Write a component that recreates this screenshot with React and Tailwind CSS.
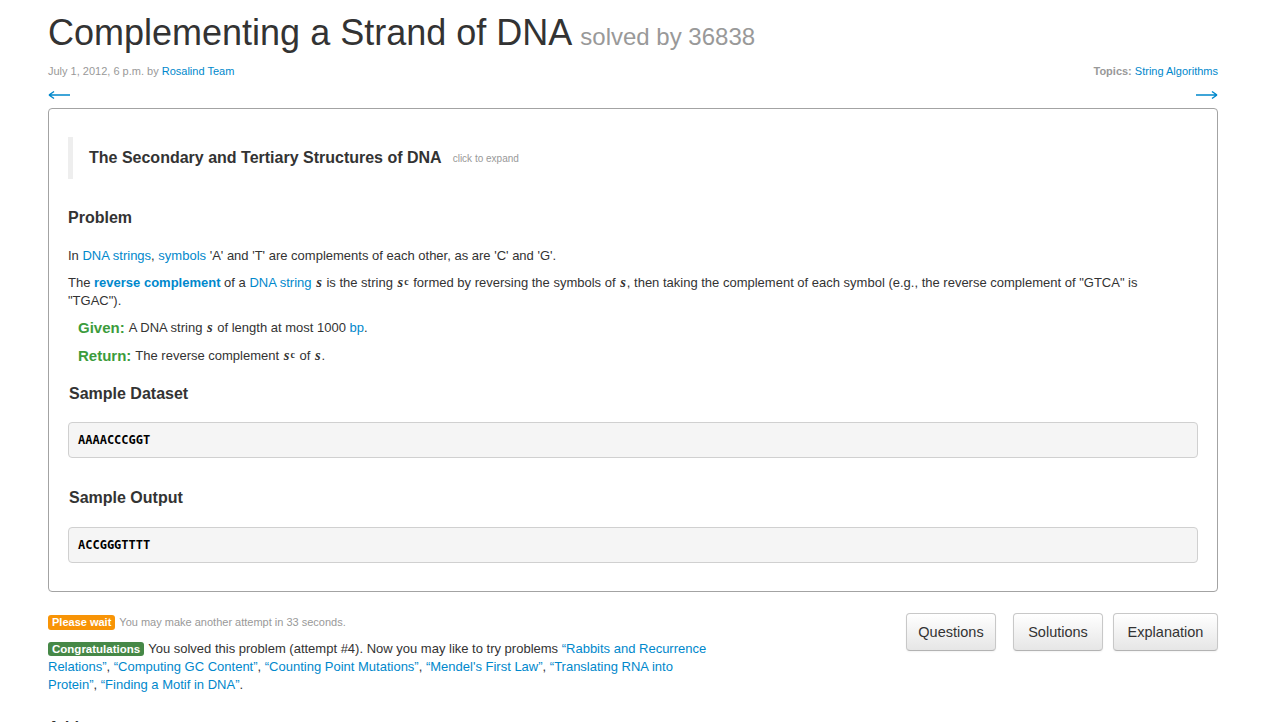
import React from "react";

const A = ({ children, bold }) => (
  <a className={`text-[#0088cc] ${bold ? "font-bold" : ""}`}>{children}</a>
);

const S = () => (
  <span className="font-bold italic text-[14.5px] leading-none mx-[1px]" style={{ fontFamily: '"Liberation Serif", serif' }}>s</span>
);
const Sc = () => (
  <span className="font-bold italic text-[14.5px] leading-none mx-[1px]" style={{ fontFamily: '"Liberation Serif", serif' }}>
    s<sup className="text-[10px] leading-none not-italic relative -top-[2px] ml-[1px]">c</sup>
  </span>
);

const Btn = ({ children, w }) => (
  <button className={`${w} h-[38px] text-[14.5px] text-[#333] rounded-[4px] border border-[#c8c8c8] border-b-[#b3b3b3] bg-gradient-to-b from-white to-[#e6e6e6] shadow-[inset_0_1px_0_rgba(255,255,255,0.2),0_1px_2px_rgba(0,0,0,0.05)]`}>
    {children}
  </button>
);

const Arrow = ({ dir }) => (
  <svg width="23" height="12" viewBox="0 0 23 12">
    {dir === "left" ? (
      <path d="M1 6 H22 M1 6 L6 2.5 M1 6 L6 9.5" stroke="#0088cc" strokeWidth="1.5" fill="none" />
    ) : (
      <path d="M1 6 H22 M22 6 L17 2.5 M22 6 L17 9.5" stroke="#0088cc" strokeWidth="1.5" fill="none" />
    )}
  </svg>
);

export default function App() {
  return (
    <div
      className="w-[1274px] h-[722px] overflow-hidden bg-white text-[#333] text-[13px] leading-[18px]"
      style={{ fontFamily: '"Liberation Sans", Arial, sans-serif' }}
    >
      <div className="mx-[48px] w-[1170px]">
        <h1 className="mt-[13px] text-[36px] leading-[40px] text-[#333]">
          Complementing a Strand of DNA{" "}
          <span className="text-[24px] leading-[20px] text-[#999]">solved by 36838</span>
        </h1>

        <div className="mt-[9px] flex justify-between text-[11px] leading-[18px] text-[#999]">
          <div>
            July 1, 2012, 6 p.m. by <A>Rosalind Team</A>
          </div>
          <div>
            <span className="font-bold">Topics:</span> <A>String Algorithms</A>
          </div>
        </div>

        <div className="mt-[7px] h-[16px] flex justify-between items-center">
          <Arrow dir="left" />
          <Arrow dir="right" />
        </div>

        <div className="mt-[5px] border border-[#a3a3a3] rounded-[4px] px-[19px] pt-[28px] pb-[28px]">
          <div className="h-[42px] border-l-[5px] border-[#eee] pl-[16px] flex items-center">
            <span className="text-[16px] font-bold leading-[20px]">The Secondary and Tertiary Structures of DNA</span>
            <span className="ml-[11px] text-[10px] text-[#999] mt-[2px]">click to expand</span>
          </div>

          <h4 className="mt-[29px] text-[16px] font-bold leading-[20px]">Problem</h4>

          <p className="mt-[19px]">
            In <A>DNA strings</A>, <A>symbols</A> 'A' and 'T' are complements of each other, as are 'C' and 'G'.
          </p>
          <p className="mt-[9px] max-w-[1085px]">
            The <A bold>reverse complement</A> of a <A>DNA string</A> <S /> is the string <Sc /> formed by reversing the symbols of <S />, then taking the complement of each symbol (e.g., the reverse complement of "GTCA" is "TGAC").
          </p>
          <div className="mt-[9px] ml-[10px] h-[18px] flex items-center">
            <span className="text-[15px] font-bold text-[#3c9c3c] mr-[4px]">Given:</span>
            <span>A DNA string <S /> of length at most 1000 <A>bp</A>.</span>
          </div>
          <div className="mt-[10px] ml-[10px] h-[18px] flex items-center">
            <span className="text-[15px] font-bold text-[#3c9c3c] mr-[4px]">Return:</span>
            <span>The reverse complement <Sc /> of <S />.</span>
          </div>

          <h4 className="mt-[19px] ml-[1px] text-[16px] font-bold leading-[20px]">Sample Dataset</h4>
          <pre
            className="mt-[18px] h-[36px] flex items-center px-[9px] bg-[#f5f5f5] border border-[#d0d0d0] rounded-[4px] text-[12px] font-bold text-[#000]"
            style={{ fontFamily: '"DejaVu Sans Mono", monospace' }}
          >
            AAAACCCGGT
          </pre>

          <h4 className="mt-[30px] ml-[1px] text-[16px] font-bold leading-[20px]">Sample Output</h4>
          <pre
            className="mt-[19px] h-[36px] flex items-center px-[9px] bg-[#f5f5f5] border border-[#d0d0d0] rounded-[4px] text-[12px] font-bold text-[#000]"
            style={{ fontFamily: '"DejaVu Sans Mono", monospace' }}
          >
            ACCGGGTTTT
          </pre>
        </div>

        <div className="mt-[21px] flex justify-between items-start">
          <div className="w-[670px]">
            <div className="h-[18px] flex items-center text-[11px] text-[#999]">
              <span className="bg-[#f89406] text-white font-bold rounded-[3px] px-[4px] leading-[15px] mr-[4px]">Please wait</span>
              You may make another attempt in 33 seconds.
            </div>
            <p className="mt-[9px]">
              <span className="bg-[#468847] text-white font-bold text-[11.5px] rounded-[3px] px-[4px] py-[1px] mr-[4px]">Congratulations</span>
              You solved this problem (attempt #4). Now you may like to try problems <A>“Rabbits and Recurrence Relations”</A>, <A>“Computing GC Content”</A>, <A>“Counting Point Mutations”</A>, <A>“Mendel's First Law”</A>, <A>“Translating RNA into Protein”</A>, <A>“Finding a Motif in DNA”</A>.
            </p>
            <h4 className="mt-[24px] text-[16px] font-bold leading-[20px]">Add a comment</h4>
          </div>
          <div className="flex gap-[10px]">
            <div className="mr-[7px]"><Btn w="w-[90px]">Questions</Btn></div>
            <Btn w="w-[90px]">Solutions</Btn>
            <Btn w="w-[105px]">Explanation</Btn>
          </div>
        </div>
      </div>
    </div>
  );
}
